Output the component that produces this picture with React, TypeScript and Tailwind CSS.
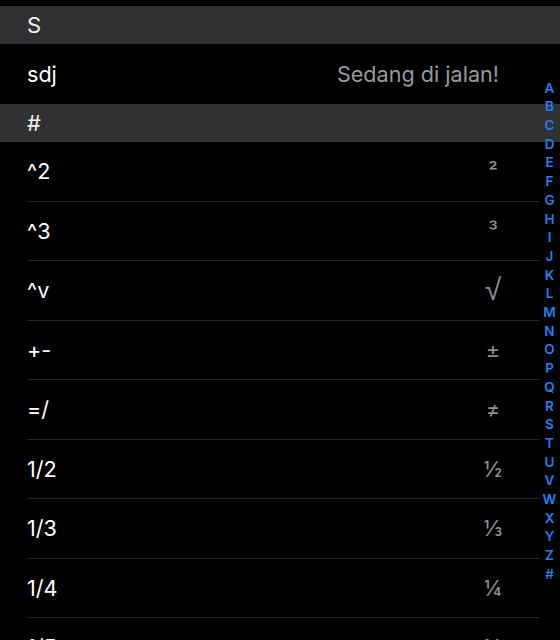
import React from "react";

const rows: [string, string][] = [
  ["^2", "²"],
  ["^3", "³"],
  ["^v", "√"],
  ["+-", "±"],
  ["=/", "≠"],
  ["1/2", "½"],
  ["1/3", "⅓"],
  ["1/4", "¼"],
  ["1/5", "⅕"],
];

const letters = "ABCDEFGHIJKLMNOPQRSTUVWXYZ#".split("");

export default function App() {
  return (
    <div
      className="relative w-[560px] h-[640px] overflow-hidden bg-black text-white"
      style={{ fontFamily: "Inter, 'Noto Sans', sans-serif" }}
    >
      <div className="h-[6px] bg-black" />
      <div className="h-[38px] bg-[#313133] flex items-center pl-[27px] text-[22px] text-[#f2f2f2]">
        S
      </div>
      <div className="h-[60px] flex items-center justify-between pl-[27px] pr-[61px] text-[21.6px]">
        <span>sdj</span>
        <span className="text-[#98989d]">Sedang di jalan!</span>
      </div>
      <div className="h-[38px] bg-[#313133] flex items-center pl-[27px] text-[22px] text-[#f2f2f2]">
        #
      </div>
      <div className="flex flex-col">
        {rows.map(([k, v]) => (
          <div
            key={k}
            className="h-[59.5px] shrink-0 ml-[27px] mr-[20px] border-b border-[#232325] flex items-center justify-between pr-[41px] text-[21.6px]"
          >
            <span>{k}</span>
            {v === "√" ? (
              <span className="text-[#8e8e93] w-[24px] text-center -mr-[6px] text-[30px] font-extralight leading-none" style={{ fontFamily: "'DejaVu Sans', sans-serif" }}>
                {v}
              </span>
            ) : (
              <span className="text-[#8e8e93] w-[24px] text-center -mr-[6px]">{v}</span>
            )}
          </div>
        ))}
      </div>
      <div className="absolute right-0 top-[78.6px] w-[21px] flex flex-col items-center text-[13.5px] font-semibold leading-[18.7px] text-[#1a82f0]">
        {letters.map((l) => (
          <span key={l}>{l}</span>
        ))}
      </div>
    </div>
  );
}
